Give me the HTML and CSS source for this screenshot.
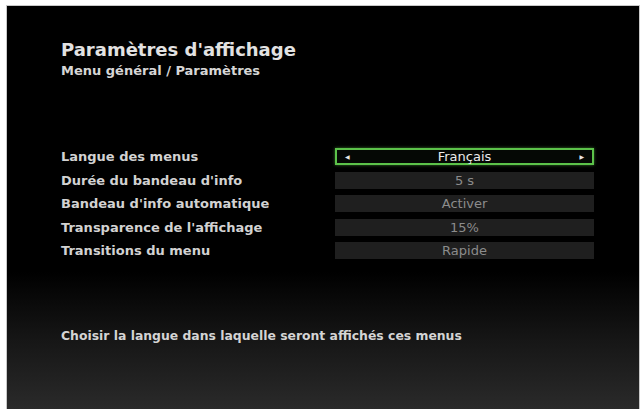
FILE: index.html
```html
<!DOCTYPE html>
<html lang="fr">
  <head>
    <meta charset="UTF-8" />
    <meta name="viewport" content="width=device-width, initial-scale=1.0" />
    <title>Paramètres d'affichage</title>
    <link rel="stylesheet" href="styles.css">
  </head>
  <body>
    <div class="screen">
      <h1>Paramètres d'affichage</h1>
      <div class="crumb">Menu général / Paramètres</div>

      <div class="menu">
        <div class="label">Langue des menus</div>
        <div class="value selected">
          <span class="arrow">&#9664;</span>
          <span>Français</span>
          <span class="arrow">&#9654;</span>
        </div>

        <div class="label">Durée du bandeau d'info</div>
        <div class="value">5 s</div>

        <div class="label">Bandeau d'info automatique</div>
        <div class="value">Activer</div>

        <div class="label">Transparence de l'affichage</div>
        <div class="value">15%</div>

        <div class="label">Transitions du menu</div>
        <div class="value">Rapide</div>
      </div>

      <div class="help">Choisir la langue dans laquelle seront affichés ces menus</div>
    </div>
  </body>
</html>
```

FILE: styles.css
```css
body {
  margin: 0;
  background: #fff;
  font-family: "DejaVu Sans", Verdana, sans-serif;
}
.screen {
  box-sizing: border-box;
  width: 632px;
  height: 403px;
  margin: 6px 0 0 7px;
  padding: 34px 0 0 54px;
  background: linear-gradient(to bottom, #000 0%, #000 66%, #151515 82%, #2a2a2a 100%);
  outline: 1px solid #c8c8c8;
  color: #dcdcdc;
}
h1 {
  margin: 0;
  font-size: 18px;
  line-height: 20px;
  font-weight: bold;
  color: #e2e2e2;
}
.crumb {
  margin-top: 3px;
  font-size: 13px;
  line-height: 15px;
  font-weight: bold;
  color: #d6d6d6;
}
.menu {
  display: grid;
  grid-template-columns: 274px 259px;
  row-gap: 6.5px;
  margin-top: 70px;
}
.label {
  font-size: 13px;
  line-height: 17px;
  font-weight: bold;
  color: #d2d2d2;
}
.value {
  box-sizing: border-box;
  height: 17px;
  background: #1f1f1f;
  color: #8c8c8c;
  font-size: 13px;
  line-height: 17px;
  text-align: center;
}
.value.selected {
  display: flex;
  justify-content: space-between;
  align-items: center;
  padding: 0 8px;
  background: #050805;
  border: 2px solid #5cc24a;
  box-shadow: 0 0 3px rgba(92, 194, 74, 0.6);
  color: #ececec;
  line-height: 13px;
}
.arrow {
  font-size: 6px;
  color: #e8e8e8;
}
.help {
  margin-top: 70px;
  font-size: 12.4px;
  line-height: 14px;
  font-weight: bold;
  color: #d4d4d4;
}
```
